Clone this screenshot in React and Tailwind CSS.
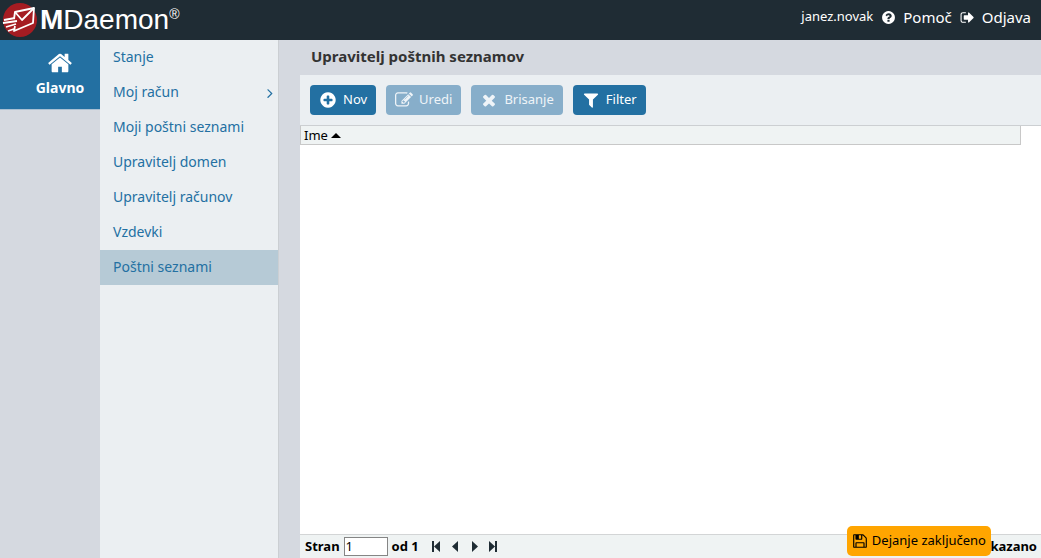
import React from "react";

const ICONS = {
  home: "M1472 992v480q0 26-19 45t-45 19h-384v-384h-256v384h-384q-26 0-45-19t-19-45v-480q0-1 .5-3t.5-3l575-474 575 474q1 2 1 6zm223-69l-62 74q-8 9-21 11h-3q-13 0-21-7l-692-577-692 577q-12 8-24 7-13-2-21-11l-62-74q-8-10-7-23.5t11-21.5l719-599q32-26 76-26t76 26l244 204v-195q0-14 9-23t23-9h192q14 0 23 9t9 23v408l219 182q10 8 11 21.5t-7 23.5z",
  question:
    "M1024 1376v-192q0-14-9-23t-23-9h-192q-14 0-23 9t-9 23v192q0 14 9 23t23 9h192q14 0 23-9t9-23zm256-672q0-88-55.5-163t-138.5-116-170-41q-243 0-371 213-15 24 8 42l132 100q7 6 19 6 16 0 25-12 53-68 86-92 34-24 86-24 48 0 85.5 26t37.5 59q0 38-20 61t-68 45q-63 28-115.5 86.5t-52.5 125.5v36q0 14 9 23t23 9h192q14 0 23-9t9-23q0-19 21.5-49.5t54.5-49.5q32-18 49-28.5t46-35 44.5-48 28-60.5 12.5-81zm384 192q0 209-103 385.5t-279.5 279.5-385.5 103-385.5-103-279.5-279.5-103-385.5 103-385.5 279.5-279.5 385.5-103 385.5 103 279.5 279.5 103 385.5z",
  signOut:
    "M704 1440q0 4 1 20t.5 26.5-3 23.5-10 19.5-20.5 6.5h-320q-119 0-203.5-84.5t-84.5-203.5v-704q0-119 84.5-203.5t203.5-84.5h320q13 0 22.5 9.5t9.5 22.5q0 4 1 20t.5 26.5-3 23.5-10 19.5-20.5 6.5h-320q-66 0-113 47t-47 113v704q0 66 47 113t113 47h312l11.5 1 11.5 3 8 5.5 7 9 2 13.5zm928-544q0 26-19 45l-544 544q-19 19-45 19t-45-19-19-45v-288h-448q-26 0-45-19t-19-45v-384q0-26 19-45t45-19h448v-288q0-26 19-45t45-19 45 19l544 544q19 19 19 45z",
  plus:
    "M1344 960v-128q0-26-19-45t-45-19h-256v-256q0-26-19-45t-45-19h-128q-26 0-45 19t-19 45v256h-256q-26 0-45 19t-19 45v128q0 26 19 45t45 19h256v256q0 26 19 45t45 19h128q26 0 45-19t19-45v-256h256q26 0 45-19t19-45zm320-64q0 209-103 385.5t-279.5 279.5-385.5 103-385.5-103-279.5-279.5-103-385.5 103-385.5 279.5-279.5 385.5-103 385.5 103 279.5 279.5 103 385.5z",
  edit: "M888 1184l116-116-152-152-116 116v56h96v96h56zm440-720q-16-16-33 1l-350 350q-17 17-1 33t33-1l350-350q17-17 1-33zm80 594v190q0 119-84.5 203.5t-203.5 84.5h-832q-119 0-203.5-84.5t-84.5-203.5v-832q0-119 84.5-203.5t203.5-84.5h832q63 0 117 25 15 7 18 23 3 17-9 29l-49 49q-14 14-32 8-23-6-45-6h-832q-66 0-113 47t-47 113v832q0 66 47 113t113 47h832q66 0 113-47t47-113v-126q0-13 9-22l64-64q15-15 35-7t20 29zm-96-738l288 288-672 672h-288v-288zm444 132l-92 92-288-288 92-92q28-28 68-28t68 28l152 152q28 28 28 68t-28 68z",
  times:
    "M1490 1322q0 40-28 68l-136 136q-28 28-68 28t-68-28l-294-294-294 294q-28 28-68 28t-68-28l-136-136q-28-28-28-68t28-68l294-294-294-294q-28-28-28-68t28-68l136-136q28-28 68-28t68 28l294 294 294-294q28-28 68-28t68 28l136 136q28 28 28 68t-28 68l-294 294 294 294q28 28 28 68z",
  filter:
    "M1595 295q17 41-14 70l-493 493v742q0 42-39 59-13 5-25 5-27 0-45-19l-256-256q-19-19-19-45v-486l-493-493q-31-29-14-70 17-39 59-39h1280q42 0 59 39z",
  save: "M512 1536h768v-384h-768v384zm896 0h128v-896q0-14-10-38.5t-20-34.5l-281-281q-10-10-34-20t-39-10v416q0 40-28 68t-68 28h-576q-40 0-68-28t-28-68v-416h-128v1280h128v-416q0-40 28-68t68-28h832q40 0 68 28t28 68v416zm-384-928v-320q0-13-9.5-22.5t-22.5-9.5h-192q-13 0-22.5 9.5t-9.5 22.5v320q0 13 9.5 22.5t22.5 9.5h192q13 0 22.5-9.5t9.5-22.5zm640 32v928q0 40-28 68t-68 28h-1344q-40 0-68-28t-28-68v-1344q0-40 28-68t68-28h928q40 0 88 20t76 48l280 280q28 28 48 76t20 88z",
  angle:
    "M1171 960q0 13-10 23l-466 466q-10 10-23 10t-23-10l-50-50q-10-10-10-23t10-23l393-393-393-393q-10-10-10-23t10-23l50-50q10-10 23-10t23 10l466 466q10 10 10 23z",
};

function Icon({ name, className }) {
  return (
    <svg
      viewBox="0 0 1792 1792"
      fill="currentColor"
      className={`shrink-0 ${className}`}
      aria-hidden="true"
    >
      <path d={ICONS[name]} />
    </svg>
  );
}

const menu = [
  { label: "Stanje" },
  { label: "Moj račun", more: true },
  { label: "Moji poštni seznami" },
  { label: "Upravitelj domen" },
  { label: "Upravitelj računov" },
  { label: "Vzdevki" },
  { label: "Poštni seznami", active: true },
];

const actions = [
  { label: "Nov", icon: "plus" },
  { label: "Uredi", icon: "edit", disabled: true },
  { label: "Brisanje", icon: "times", disabled: true },
  { label: "Filter", icon: "filter" },
];

const pages = [
  { label: "Prva stran", d: "M1 0h2v11H1zM9 0v11L3 5.5z" },
  { label: "Prejšnja stran", d: "M8 0v11L2 5.5z" },
  { label: "Naslednja stran", d: "M3 0v11l6-5.5z" },
  { label: "Zadnja stran", d: "M7 0h2v11H7zM1 0v11l6-5.5z" },
];

function Logo() {
  return (
    <a href="#" aria-label="MDaemon" className="flex items-center text-white">
      <svg viewBox="0 0 36 36" className="h-9 w-9" aria-hidden="true">
        <circle cx="18" cy="18" r="17" fill="#a51c22" />
        <g fill="none" stroke="#fff" strokeWidth="1.8" strokeLinejoin="round">
          <path d="M12 17l1-7 19-4-1 15-19 8 1-5" />
          <path d="M13 10l7 8L32 6" />
          <path d="M2 18l11-2M1 21l14-2M4 25l10-3M6 29l6-2" />
        </g>
      </svg>
      <span className="pl-[2px] font-['Liberation_Sans'] text-[28px] leading-9">
        <b>M</b>Daemon
      </span>
      <span className="self-start pt-[2px] font-['Liberation_Sans'] text-[14px] leading-5">
        ®
      </span>
    </a>
  );
}

export default function App() {
  return (
    <div className="relative flex min-h-screen flex-col bg-[#d5d9e0] font-['Noto_Sans',sans-serif] text-[13px] text-black">
      {/* Top bar */}
      <header className="flex h-10 items-center justify-between bg-[#1f2c34] pr-[10px] pl-[2px] text-white">
        <Logo />
        <div className="flex items-center gap-2 pb-[6px] text-[15px]">
          <span className="text-[13px]">janez.novak</span>
          <a href="#" className="flex items-center gap-[7px]">
            <Icon name="question" className="h-[15px] w-[15px]" />
            Pomoč
          </a>
          <a href="#" className="flex items-center gap-[7px]">
            <Icon name="signOut" className="h-[15px] w-[15px]" />
            Odjava
          </a>
        </div>
      </header>

      <div className="flex flex-1">
        {/* Section tabs */}
        <aside className="w-[100px] shrink-0">
          <a
            href="#"
            className="flex h-[70px] flex-col items-center border-b border-[#a9c0d3] bg-[#2370a2] pt-[10px] pl-5 text-[14px] font-bold text-white"
          >
            <Icon name="home" className="h-[26px] w-[26px]" />
            <span className="leading-6">Glavno</span>
          </a>
        </aside>

        {/* Menu */}
        <nav className="w-[179px] shrink-0 border-r border-[#cbcfd3] bg-[#ebeff2] text-[14px]">
          {menu.map((item) => (
            <a
              key={item.label}
              href="#"
              className={`flex h-[35px] items-center justify-between pl-[13px] leading-[33px] text-[#2370a2] ${
                item.active ? "bg-[#b6cad6]" : ""
              }`}
            >
              <span className="h-[35px]">{item.label}</span>
              {item.more && <Icon name="angle" className="h-4 w-4" />}
            </a>
          ))}
        </nav>

        {/* Content */}
        <main className="ml-[21px] flex min-w-0 flex-1 flex-col bg-white">
          <h1 className="h-[35px] bg-[#d5d9e0] pl-[11px] text-[15px] leading-[33px] font-bold text-[#333]">
            Upravitelj poštnih seznamov
          </h1>
          <div className="flex h-[51px] items-center gap-[10px] border-b border-[#cccfd2] bg-[#ebeff2] px-[10px]">
            {actions.map((action) => (
              <button
                key={action.label}
                type="button"
                disabled={action.disabled}
                className="flex h-[30px] items-center gap-[6px] rounded-[4px] bg-[#2370a2] px-[9px] text-[13px] text-white disabled:bg-[#87aeca] disabled:text-[#eff4f8]"
              >
                <Icon name={action.icon} className="h-[18px] w-[18px]" />
                {action.label}
              </button>
            ))}
          </div>
          <div className="flex-1 pr-5">
            <table className="w-full border-collapse">
              <thead>
                <tr>
                  <th className="border border-t-0 border-[#c8c8c8] bg-[#eff3f3] px-[3px] py-0 text-left font-normal">
                    <span className="flex h-[18px] items-center gap-[3px] leading-4">
                      Ime
                      <svg viewBox="0 0 10 5" className="h-[5px] w-[10px]" aria-hidden="true">
                        <path d="M0 5l5-5 5 5z" />
                      </svg>
                    </span>
                  </th>
                </tr>
              </thead>
            </table>
          </div>
          <footer className="flex h-6 items-center border-t border-[#d3d5d6] bg-[#eff3f3] pr-1 pl-[5px] font-bold">
            <label htmlFor="page">Stran</label>
            <input
              id="page"
              defaultValue="1"
              className="mx-1 h-[19px] w-11 border border-[#858585] bg-white px-[1px] font-normal"
            />
            od 1
            <div className="flex gap-2 pl-3 text-[#1f2c34]">
              {pages.map((page) => (
                <button key={page.label} type="button" aria-label={page.label}>
                  <svg viewBox="0 0 11 11" className="h-[11px] w-[11px]" fill="currentColor">
                    <path d={page.d} />
                  </svg>
                </button>
              ))}
            </div>
            <span className="ml-auto">kazano</span>
          </footer>
        </main>
      </div>

      {/* Status message */}
      <div
        role="status"
        className="absolute right-[50px] bottom-[2px] flex h-[30px] items-center gap-1 rounded-[5px] bg-[#ffa500] px-[5px] pb-[1px]"
      >
        <Icon name="save" className="h-4 w-4" />
        Dejanje zaključeno
      </div>
    </div>
  );
}
